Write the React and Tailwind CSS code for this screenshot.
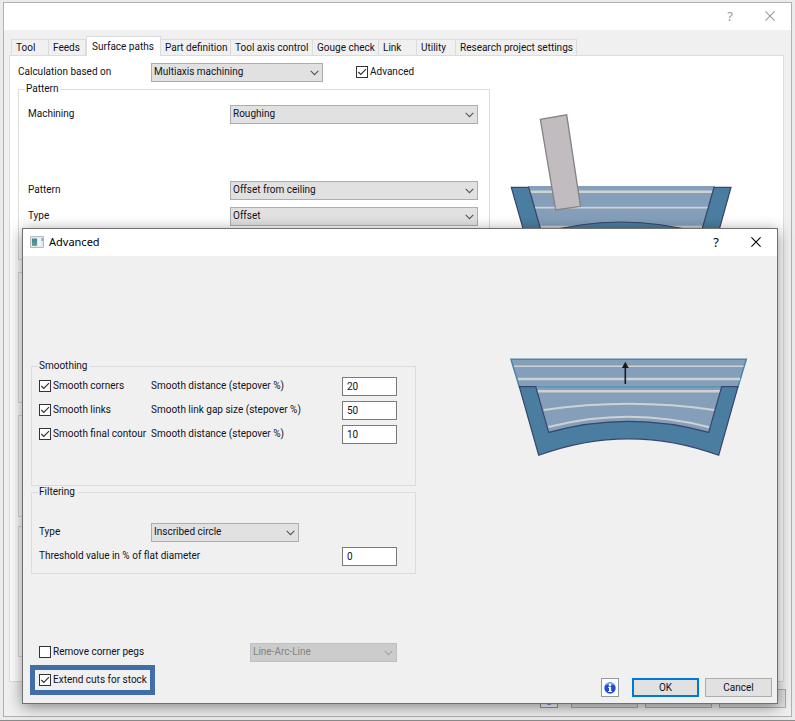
import React from "react";

const TABS = [
  { name: "Tool", width: "w-[38px]", first: true },
  { name: "Feeds", width: "w-[37px]" },
  { name: "Surface paths", width: "w-[75px]", active: true },
  { name: "Part definition", width: "w-[70px]" },
  { name: "Tool axis control", width: "w-[82px]" },
  { name: "Gouge check", width: "w-[66px]" },
  { name: "Link", width: "w-[38px]" },
  { name: "Utility", width: "w-[39px]" },
  { name: "Research project settings", width: "w-[121px]" },
];

function Select({ id, label, value, className, disabled }) {
  return (
    <div className={"relative h-[19px] " + className}>
      <select
        id={id}
        aria-label={label}
        disabled={disabled}
        defaultValue={value}
        className="block h-full w-full appearance-none border border-[#adadad] bg-[#e1e1e1] pl-[2px] pr-5 text-[10px] leading-4 text-[#111122] opacity-100 disabled:border-[#bfbfbf] disabled:bg-[#cccccc] disabled:text-[#838383]"
      >
        <option>{value}</option>
      </select>
      <svg
        viewBox="0 0 9 6"
        className={
          "pointer-events-none absolute right-1 top-[7px] h-[6px] w-[9px] " +
          (disabled ? "text-[#a3a3a3]" : "text-[#555555]")
        }
      >
        <path d="M0.7 0.8 4.5 4.6 8.3 0.8" fill="none" stroke="currentColor" strokeWidth="1.1" />
      </svg>
    </div>
  );
}

function Check({ label, checked }) {
  return (
    <label className="flex items-center gap-[2px] whitespace-nowrap">
      <span className="relative block h-3 w-3">
        <input
          type="checkbox"
          defaultChecked={checked}
          className="peer block h-3 w-3 appearance-none border border-[#333333] bg-white"
        />
        <svg viewBox="0 0 12 12" className="pointer-events-none absolute inset-0 hidden h-3 w-3 peer-checked:block">
          <path d="M2.3 6 4.8 8.5 10 3.2" fill="none" stroke="#333" strokeWidth="1.2" />
        </svg>
      </span>
      {label}
    </label>
  );
}

function Group({ title, className, children }) {
  return (
    <fieldset className={"border border-[#dcdcdc] pl-[6px] " + className}>
      <legend className="h-3 px-px pr-[3px] leading-3">{title}</legend>
      {children}
    </fieldset>
  );
}

function NumberRow({ id, lead, label, value }) {
  return (
    <div className="flex h-6 items-center">
      {lead && <div className="w-28">{lead}</div>}
      <label htmlFor={id} className="flex-1 whitespace-nowrap">
        {label}
      </label>
      <input
        id={id}
        type="text"
        defaultValue={value}
        className="h-[19px] w-[55px] border border-[#7a7a7a] bg-white px-1 text-[10px] leading-4"
      />
    </div>
  );
}

function CloseIcon() {
  return (
    <svg viewBox="0 0 10 10" className="h-[10px] w-[10px]">
      <path d="M0.4 0.4 9.6 9.6M9.6 0.4 0.4 9.6" fill="none" stroke="currentColor" strokeWidth="1.1" />
    </svg>
  );
}

function InfoIcon() {
  return (
    <svg viewBox="0 0 12 12" className="h-3 w-3">
      <circle cx="6" cy="6" r="5.700" fill="#1d4fd6" />
      <path d="M6 .3a5.700 5.700 0 0 0-5 3.400C3 2 9 2 11 3.700A5.700 5.700 0 0 0 6 .3z" fill="#7aa2f2" />
      <circle cx="6" cy="2.900" r="1.300" fill="#fff" />
      <path d="M4.200 4.800h2.900v4.200h.9v1.100H4.200V9h.8V5.900h-.8z" fill="#fff" />
    </svg>
  );
}

function MachiningPicture() {
  return (
    <svg viewBox="0 0 223 120" className="h-[120px] w-[223px]" role="img" aria-label="Roughing preview">
      <path d="M18 72H205L191 119H32Z" fill="#859fbb" />
      <path d="M20 77.7H203" stroke="#ced3d1" strokeWidth="2.4" />
      <path d="M25 93.7H198" stroke="#ced3d1" strokeWidth="1.8" />
      <path d="M30 112.7H192" stroke="#ced3d1" strokeWidth="2" />
      <path
        d="M1.3 73.3H18.7L31.7 119Q111 97 191 119L204 73.3H221L208 120H14.6Z"
        fill="#4a7d9f"
        stroke="#35456b"
        strokeWidth="1.2"
      />
      <path d="M30.3 5.3 56.7 .8 70.5 92.3 45.7 96Z" fill="#c0bcc0" stroke="#858380" strokeWidth="1.3" />
    </svg>
  );
}

function StockPicture() {
  return (
    <svg viewBox="0 0 238 100" className="h-[100px] w-[238px]" role="img" aria-label="Stock extension preview">
      <path d="M.9 1.2H236.3L228 28.7H9.3Z" fill="#859fbb" stroke="#4a86a8" strokeWidth="1.5" />
      <path d="M25 28.7H212L199 75Q119 53 38.7 75Z" fill="#859fbb" />
      <path d="M4 8.3H233.5" stroke="#ced3d1" strokeWidth="1.5" />
      <path d="M8 21H230" stroke="#ced3d1" strokeWidth="2.4" />
      <path d="M27.5 33.3H210" stroke="#ced3d1" strokeWidth="2.4" />
      <path
        d="M33.5 52Q119 39.3 204.3 52M38.3 69Q119 48.5 199.3 69.3"
        fill="none"
        stroke="#ced3d1"
        strokeWidth="2"
      />
      <path d="M9.3 28.7H228" stroke="#5f93b2" strokeWidth="1.4" />
      <path
        d="M9.3 28.7H25.7L38.7 74.3Q118.7 52.3 198.7 74.3L211.7 28.7H228L208.7 97.3Q118.7 64.3 28.7 97.3Z"
        fill="#4a7d9f"
        stroke="#35456b"
        strokeWidth="1.2"
      />
      <path d="M115.3 26V9" stroke="#1a1a1a" strokeWidth="1.6" />
      <path d="M115.3 3.8 118.8 10H111.8Z" fill="#1a1a1a" />
    </svg>
  );
}

const BTN = "h-[19px] w-[67px] border border-[#adadad] bg-[#e1e1e1] leading-4";
const INFO_BTN = "flex h-[19px] w-[18px] items-center justify-center border border-[#8f9aa3] bg-white";

function MainWindow() {
  return (
    <div className="border border-[#b0b0b0] bg-[#f0f0f0]">
      <header className="flex h-[27px] items-center justify-end gap-8 bg-white pb-[2px] pr-4 text-[#999999]">
        <button type="button" aria-label="Help" className="font-['Noto_Sans',sans-serif] text-[13px] leading-4">
          ?
        </button>
        <button type="button" aria-label="Close">
          <CloseIcon />
        </button>
      </header>
      <div className="pl-[5px] pr-[7px] pt-[6px]">
        <div role="tablist" className="flex items-end pl-[2px]">
          {TABS.map((t) => (
            <button
              key={t.name}
              type="button"
              role="tab"
              aria-selected={!!t.active}
              className={
                "relative whitespace-nowrap border-t border-[#dcdcdc] text-left leading-4 " +
                t.width +
                (t.active
                  ? " -mb-px h-5 border-x bg-white pl-[5px]"
                  : " h-4 border-r bg-[#f0f0f0] pl-1" + (t.first ? " border-l" : ""))
              }
            >
              {t.name}
            </button>
          ))}
        </div>
        <div className="border border-[#dcdcdc] bg-white pb-6 pl-2 pt-[5px]">
          <div className="flex h-[22px] items-center">
            <label htmlFor="calc" className="w-[133px]">
              Calculation based on
            </label>
            <Select id="calc" value="Multiaxis machining" className="w-[172px]" />
            <div className="pl-[33px]">
              <Check label="Advanced" checked />
            </div>
          </div>
          <div className="flex">
            <div className="w-[472px]">
              <Group title="Pattern" className="pb-[31px] pr-[11px] pt-[7px]">
                <div className="flex h-6 items-center pl-[3px]">
                  <label htmlFor="machining" className="w-[202px]">Machining</label>
                  <Select id="machining" value="Roughing" className="flex-1" />
                </div>
                <div className="mt-[52px] flex h-6 items-center pl-[3px]">
                  <label htmlFor="pattern" className="w-[202px]">Pattern</label>
                  <Select id="pattern" value="Offset from ceiling" className="flex-1" />
                </div>
                <div className="mt-[2px] flex h-6 items-center pl-[3px]">
                  <label htmlFor="type" className="w-[202px]">Type</label>
                  <Select id="type" value="Offset" className="flex-1" />
                </div>
              </Group>
              <div className="mt-3 h-[131px] border border-[#dcdcdc]" />
              <div className="mt-3 h-[102px] border border-[#dcdcdc]" />
              <div className="mt-[9px] h-[131px] border border-[#dcdcdc]" />
            </div>
            <div className="flex flex-1 justify-center pr-[30px] pt-[31px]">
              <MachiningPicture />
            </div>
          </div>
        </div>
      </div>
      <div className="flex justify-end gap-[7px] pb-2 pr-[5px] pt-[7px]">
        <button type="button" aria-label="Information" className={INFO_BTN + " mr-[6px]"}>
          <InfoIcon />
        </button>
        <button type="button" aria-label="OK" className={BTN} />
        <button type="button" aria-label="Cancel" className={BTN} />
        <button type="button" className={BTN}>Help</button>
      </div>
    </div>
  );
}

function AdvancedDialog() {
  return (
    <div
      role="dialog"
      aria-label="Advanced"
      className="absolute left-[22px] right-[17px] top-[228px] border border-[#707070] bg-[#f0f0f0] shadow-[0_3px_14px_rgba(0,0,0,0.45)]"
    >
      <header className="flex h-[27px] items-center bg-white pb-[2px] pl-[7px] pr-4 font-['Noto_Sans',sans-serif] text-[11px] leading-4 text-black">
        <svg viewBox="0 0 14 12" className="h-3 w-[14px]">
          <path d="M.5.5h13v11H.5z" fill="#e6e9ec" stroke="#b4bbc4" />
          <path d="M2 2.5h5v7H2z" fill="#4c87a0" />
          <path d="M2 6h5v3.500H2z" fill="#559a87" />
          <path d="M8 2.500h3v7H8z" fill="#f4f4f4" />
          <path d="M11.500 2h1.500v3h-1.500z" fill="#7ba8cf" />
        </svg>
        <h1 className="flex-1 pl-[5px]">Advanced</h1>
        <button type="button" aria-label="Help" className="mr-8 text-[13px]">
          ?
        </button>
        <button type="button" aria-label="Close">
          <CloseIcon />
        </button>
      </header>
      <div className="flex pl-2">
        <div className="w-[385px] pt-[104px]">
          <Group title="Smoothing" className="pb-[39px] pr-[18px] pt-[2px]">
            <div className="pl-px">
              <NumberRow
                id="corners"
                lead={<Check label="Smooth corners" checked />}
                label="Smooth distance (stepover %)"
                value="20"
              />
              <NumberRow
                id="links"
                lead={<Check label="Smooth links" checked />}
                label="Smooth link gap size (stepover %)"
                value="50"
              />
              <NumberRow
                id="contour"
                lead={<Check label="Smooth final contour" checked />}
                label="Smooth distance (stepover %)"
                value="10"
              />
            </div>
          </Group>
          <Group title="Filtering" className="pb-[5px] pr-[18px] pt-[22px]">
            <div className="pl-px">
              <div className="flex h-6 items-center">
                <label htmlFor="filter" className="w-28">
                  Type
                </label>
                <Select id="filter" value="Inscribed circle" className="w-[148px]" />
              </div>
              <NumberRow id="threshold" label="Threshold value in % of flat diameter" value="0" />
            </div>
          </Group>
        </div>
        <div className="flex flex-1 justify-center pl-16 pt-[102px]">
          <StockPicture />
        </div>
      </div>
      <div className="mt-[66px] flex h-6 items-center pl-4">
        <div className="w-[211px]">
          <Check label="Remove corner pegs" />
        </div>
        <Select label="Corner style" value="Line-Arc-Line" disabled className="w-[147px]" />
      </div>
      <div className="flex items-end pl-[7px] pr-[5px] pt-px">
        <div className="mb-2 flex h-[30px] items-center border-[5px] border-[#416da8] pl-1 pr-[3px]">
          <Check label="Extend cuts for stock" checked />
        </div>
        <div className="flex flex-1 justify-end pb-[6px]">
          <button type="button" aria-label="Information" className={INFO_BTN + " mr-[13px]"}>
            <InfoIcon />
          </button>
          <button
            type="button"
            className="mr-[6px] h-[19px] w-[67px] border-2 border-[#0078d7] bg-[#e1e1e1] leading-[15px]"
          >
            OK
          </button>
          <button type="button" className={BTN}>
            Cancel
          </button>
        </div>
      </div>
    </div>
  );
}

export default function App() {
  return (
    <div className="relative border-b border-[#8a8a8a] bg-[#ebebeb] px-[3px] pb-[3px] pt-[2px] font-['Roboto','Liberation_Sans',sans-serif] text-[10px] leading-4 text-[#111122]">
      <MainWindow />
      <AdvancedDialog />
    </div>
  );
}
